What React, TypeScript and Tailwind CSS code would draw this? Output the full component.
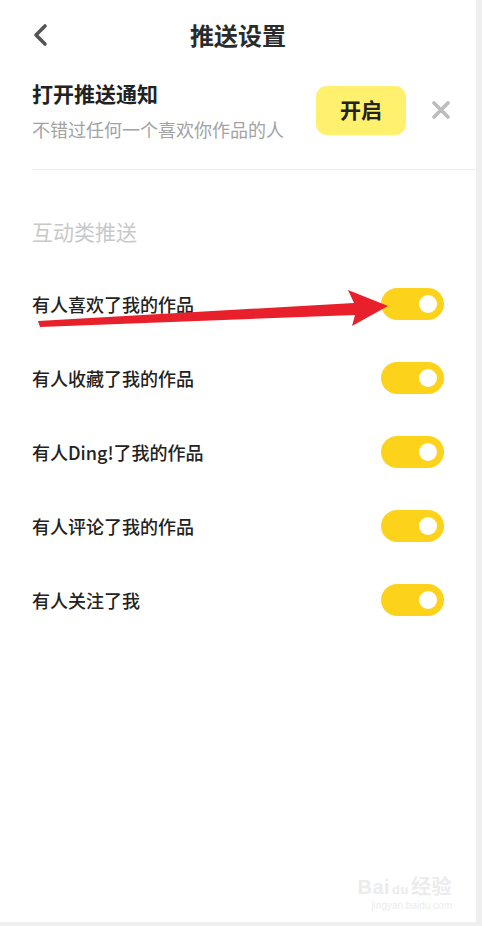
const rows = ["有人喜欢了我的作品", "有人收藏了我的作品", "有人Ding!了我的作品", "有人评论了我的作品", "有人关注了我"];

const font = { fontFamily: '"Noto Sans CJK SC", "Noto Sans", sans-serif' };

function Toggle() {
  return (
    <div className="flex h-[32px] w-[63px] items-center justify-end rounded-full bg-[#fdd21b] pr-[7px]">
      <div className="h-[18px] w-[18px] rounded-full bg-white" />
    </div>
  );
}

export default function App() {
  return (
    <div className="relative h-[926px] w-[482px] bg-[#efefef]" style={font}>
      <div className="h-[922px] w-[476px] bg-white">
        <header className="relative flex h-[70px] items-center justify-center">
          <svg className="absolute left-[32px] top-[23px]" width="17" height="24" viewBox="0 0 17 24">
            <path d="M13 3 L4 12 L13 21" fill="none" stroke="#555" strokeWidth="3.6" strokeLinecap="round" strokeLinejoin="round" />
          </svg>
          <h1 className="text-[24px] font-bold leading-none text-[#2b2b2b]">推送设置</h1>
        </header>

        <div className="flex h-[80px] items-center pl-[32px] pr-[26px]">
          <div className="flex-1">
            <p className="text-[21px] font-bold leading-[30px] text-[#222]">打开推送通知</p>
            <p className="mt-[8px] text-[18px] leading-[26px] text-[#a3a3a3]">不错过任何一个喜欢你作品的人</p>
          </div>
          <button className="flex h-[49px] w-[90px] items-center justify-center rounded-[11px] bg-[#fff06e] text-[21px] font-bold text-[#222]">
            开启
          </button>
          <svg className="ml-[26px]" width="18" height="18" viewBox="0 0 18 18">
            <path d="M2 2 L16 16 M16 2 L2 16" stroke="#bdbdbd" strokeWidth="3.6" strokeLinecap="round" />
          </svg>
        </div>

        <div className="ml-[32px] mt-[19px] border-t border-[#eeeeee]" />

        <p className="mt-[46px] pl-[32px] text-[21px] leading-[30px] text-[#c9c9c9]">互动类推送</p>

        <div className="mt-[21px] pl-[32px] pr-[32px]">
          {rows.map((r) => (
            <div key={r} className="flex h-[74px] items-center justify-between">
              <span className="text-[18px] font-medium text-[#222]">{r}</span>
              <Toggle />
            </div>
          ))}
        </div>

        <div className="mt-[240px] flex flex-col items-end pr-[24px] leading-none text-[#ececec]">
          <span className="text-[20px] font-bold tracking-wide" style={{ fontFamily: '"Liberation Sans", "Noto Sans CJK SC", sans-serif' }}>
            Bai<span className="mx-[2px] text-[13px]">du</span>经验
          </span>
          <span className="mt-[4px] text-[10px]" style={{ fontFamily: '"Liberation Sans", sans-serif' }}>jingyan.baidu.com</span>
        </div>
      </div>

      <svg className="pointer-events-none absolute left-0 top-0" width="482" height="926" viewBox="0 0 482 926">
        <polygon points="38,321 354,303 348,290 388,306 352,326 355,315 40,327" fill="#e8202b" />
      </svg>
    </div>
  );
}
